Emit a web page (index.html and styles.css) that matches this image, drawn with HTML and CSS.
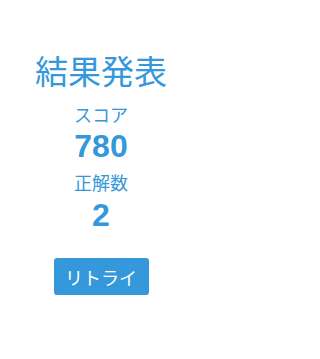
FILE: index.html
```html
<!DOCTYPE html>
<html lang="ja">
<head>
<meta charset="utf-8">
<link rel="stylesheet" href="styles.css">
</head>
<body>
<main class="result">
  <h1 class="title">結果発表</h1>
  <div class="label label-score">スコア</div>
  <div class="value value-score">780</div>
  <div class="label label-correct">正解数</div>
  <div class="value value-correct">2</div>
  <button class="retry">リトライ</button>
</main>
</body>
</html>
```
FILE: styles.css
```css
html, body {
  margin: 0;
  padding: 0;
  background: #ffffff;
}
body {
  font-family: "Liberation Sans", "Noto Sans CJK JP", sans-serif;
  color: #3498db;
}
.result {
  width: 202px;
  display: flex;
  flex-direction: column;
  align-items: center;
  padding-top: 50px;
}
.title {
  margin: 0;
  font-family: "Noto Sans CJK JP", sans-serif;
  font-weight: 400;
  font-size: 33px;
  line-height: 40px;
  white-space: nowrap;
}
.label {
  font-family: "Noto Sans CJK JP", sans-serif;
  font-size: 18px;
  line-height: 22px;
}
.label-score { margin-top: 13px; }
.label-correct { margin-top: 9px; }
.value {
  font-family: "Liberation Sans", Arial, sans-serif;
  font-weight: 700;
  font-size: 32px;
  line-height: 32px;
}
.value-score { margin-top: 5px; }
.value-correct { margin-top: 6px; }
.retry {
  margin-top: 27px;
  width: 95px;
  height: 37px;
  border: none;
  border-radius: 3px;
  background: #3498db;
  color: #ffffff;
  font-family: "Noto Sans CJK JP", sans-serif;
  font-size: 18px;
  padding: 0;
}
```
